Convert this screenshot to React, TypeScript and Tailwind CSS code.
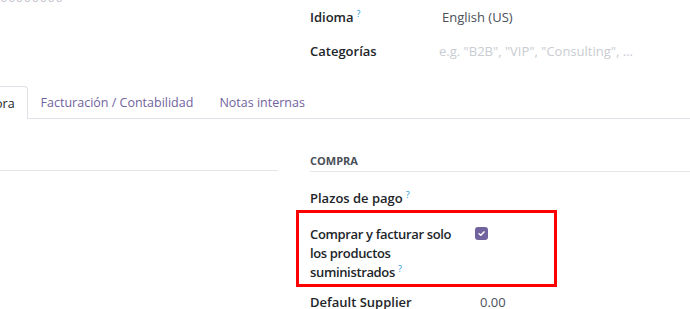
import React from "react";

const Q = () => (
  <span className="ml-[3px] inline-block align-top text-[9px] leading-[12px] font-normal text-[#1f9ad6]">?</span>
);

export default function App() {
  return (
    <div className="w-[690px] h-[309px] overflow-hidden bg-white text-[13px] leading-[19px] text-[#212529] font-['Open_Sans',sans-serif]">
      <div className="grid grid-cols-[278px_1fr] gap-x-[18px]">
        <div className="-mt-[12px] text-[#c4c8cf] tracking-[0.5px]">00000000</div>
        <div className="pl-[14px] pb-[18px]">
          <div className="flex h-[34px] items-center">
            <div className="w-[132px] font-semibold">
              Idioma
              <Q />
            </div>
            <div className="text-[#4a4f59]">English (US)</div>
          </div>
          <div className="flex h-[34px] items-center">
            <div className="w-[129px] font-semibold">Categorías</div>
            <div className="text-[#c9ccd2]">e.g. "B2B", "VIP", "Consulting", ...</div>
          </div>
        </div>
      </div>

      <div className="flex h-[33px] border-b border-[#dee2e6] text-[12.5px]">
        <div className="-mb-px -ml-[5px] flex h-[33px] items-center rounded-tr-[4px] border-r border-t border-[#dee2e6] bg-white pr-[12px] text-[#212529]">
          ora
        </div>
        <div className="flex items-center px-[13px] text-[#71639e]">Facturación / Contabilidad</div>
        <div className="flex items-center px-[13px] text-[#71639e]">Notas internas</div>
      </div>

      <div className="grid grid-cols-[278px_1fr] gap-x-[18px]">
        <div className="h-[52px] border-b border-[#e3e6ea]" />
        <div className="pl-[14px]">
          <div className="mt-[34px] border-b border-[#e3e6ea] pb-[2px] text-[11px] font-bold leading-[16px] text-[#4a4f59]">
            COMPRA
          </div>
          <div className="mt-[17px] font-semibold">
            Plazos de pago
            <Q />
          </div>
          <div className="-ml-[14px] mt-[2px] flex h-[77px] w-[261px] border-[3px] border-[#ff0000] pl-[11px] pt-[12px]">
            <div className="w-[165px] pr-[10px] font-semibold tracking-[-0.35px]">
              Comprar y facturar solo los productos suministrados
              <Q />
            </div>
            <div className="mt-[2px] flex h-[13px] w-[13px] items-center justify-center rounded-[3px] bg-[#71639e]">
              <svg width="9" height="9" viewBox="0 0 10 10">
                <path d="M2.3 5.2 L4.2 7 L7.8 3.2" fill="none" stroke="white" strokeWidth="1.6" strokeLinecap="round" strokeLinejoin="round" />
              </svg>
            </div>
          </div>
          <div className="mt-[6px] flex">
            <div className="w-[170px] font-semibold">Default Supplier</div>
            <div className="text-[#4a4f59]">0.00</div>
          </div>
        </div>
      </div>
    </div>
  );
}
